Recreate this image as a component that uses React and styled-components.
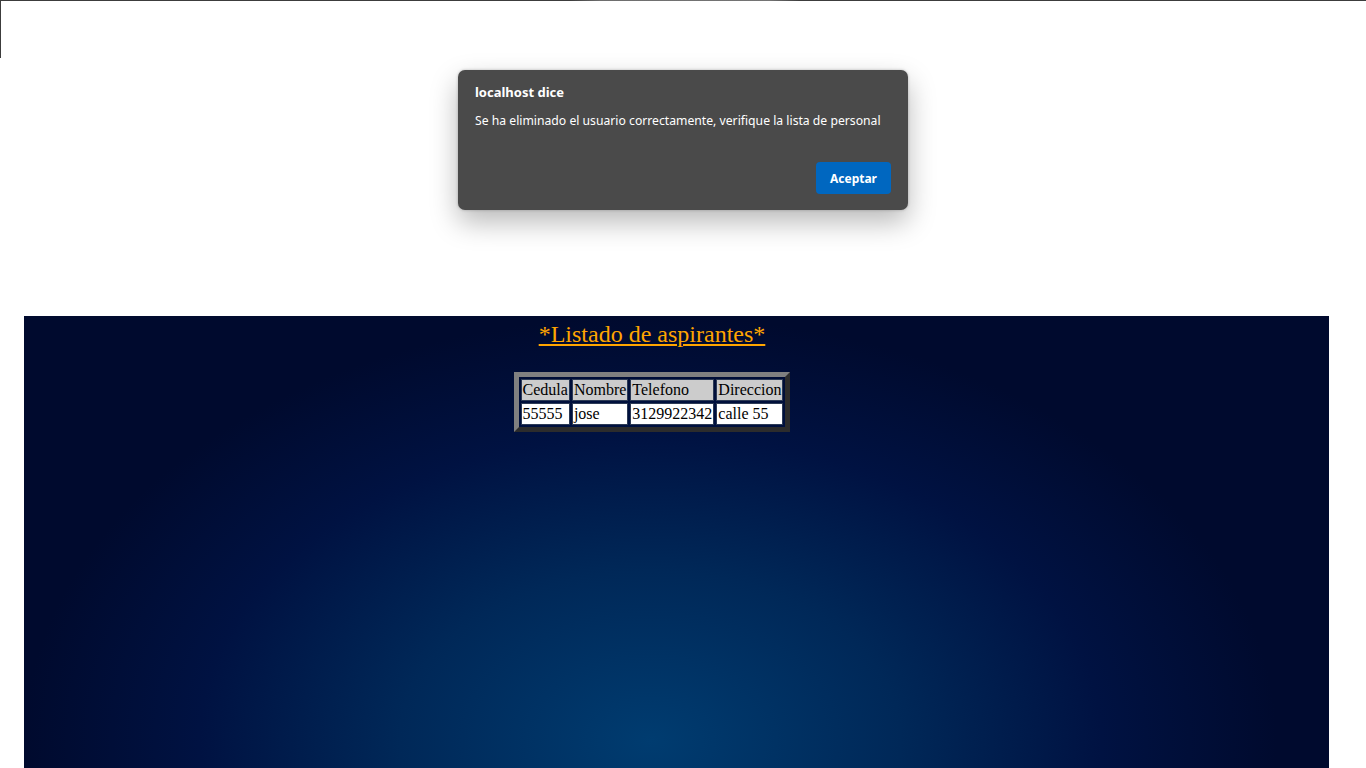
import React from "react";
import styled, { createGlobalStyle } from "styled-components";

const GlobalStyle = createGlobalStyle`
    html, body {
        margin: 0;
        padding: 0;
        background: #ffffff;
        overflow: hidden;
    }
    body {
        font-family: "Liberation Serif", "Times New Roman", serif;
    }
`;

const Page = styled.div`
    position: relative;
    width: 1366px;
    height: 768px;
    padding: 316px 0 0 24px;
    box-sizing: border-box;
    overflow: hidden;
`;

// thin window frame leftovers at the top-left corner
const TopEdge = styled.div`
    position: absolute;
    top: 0;
    left: 0;
    width: 100%;
    height: 1px;
    background: linear-gradient(
        to right,
        #3c3c3c 0,
        #3c3c3c 570px,
        #6e6e6e 600px,
        #747474 770px,
        #3c3c3c 800px,
        #3c3c3c 100%
    );
`;

const LeftEdge = styled.div`
    position: absolute;
    top: 0;
    left: 0;
    width: 1px;
    height: 58px;
    background: #3c3c3c;
`;

const Panel = styled.div`
    width: 1305px;
    height: 850px;
    padding: 5px 49px 0 0;
    box-sizing: border-box;
    background: radial-gradient(
        ellipse closest-side at 48% 50%,
        #003c70 0%,
        #002858 40%,
        #001242 72%,
        #000a2e 100%
    );
    display: flex;
    flex-direction: column;
    align-items: center;
`;

const Title = styled.div`
    font-size: 24px;
    color: #ffa500;
    text-decoration: underline;
    margin-bottom: 24px;
`;

const Table = styled.table`
    border: 5px outset #808080;
    border-spacing: 2px;
    font-size: 16px;
`;

const Cell = styled.td`
    border: 1px solid #2c3a55;
    padding: 1px;
    background: ${(p) => (p.$head ? "#cccccc" : "#ffffff")};
    color: #000000;
    white-space: nowrap;
`;

const Dialog = styled.div`
    position: absolute;
    top: 70px;
    left: 458px;
    width: 450px;
    height: 140px;
    box-sizing: border-box;
    background: #4a4a4a;
    border-radius: 7px;
    box-shadow: 0 12px 28px rgba(0, 0, 0, 0.28), 0 0 3px rgba(0, 0, 0, 0.25);
    padding: 14px 17px 16px 17px;
    display: flex;
    flex-direction: column;
    font-family: "Noto Sans", "Open Sans", sans-serif;
    color: #ffffff;
`;

const DialogTitle = styled.div`
    font-size: 13px;
    font-weight: 700;
    line-height: 16px;
`;

const DialogText = styled.div`
    font-size: 12.2px;
    line-height: 16px;
    margin-top: 13px;
`;

const DialogFooter = styled.div`
    margin-top: auto;
    display: flex;
    justify-content: flex-end;
`;

const Button = styled.button`
    width: 75px;
    height: 32px;
    border: none;
    border-radius: 4px;
    background: #0067c0;
    color: #ffffff;
    font-family: "Noto Sans", "Open Sans", sans-serif;
    font-size: 12px;
    font-weight: 700;
`;

const headers = ["Cedula", "Nombre", "Telefono", "Direccion"];
const rows = [["55555", "jose", "3129922342", "calle 55"]];

export default function App() {
    return (
        <Page>
            <GlobalStyle />
            <TopEdge />
            <LeftEdge />
            <Panel>
                <Title>*Listado de aspirantes*</Title>
                <Table>
                    <tbody>
                        <tr>
                            {headers.map((h) => (
                                <Cell $head key={h}>
                                    {h}
                                </Cell>
                            ))}
                        </tr>
                        {rows.map((r, i) => (
                            <tr key={i}>
                                {r.map((v, j) => (
                                    <Cell key={j}>{v}</Cell>
                                ))}
                            </tr>
                        ))}
                    </tbody>
                </Table>
            </Panel>
            <Dialog>
                <DialogTitle>localhost dice</DialogTitle>
                <DialogText>
                    Se ha eliminado el usuario correctamente, verifique la lista de personal
                </DialogText>
                <DialogFooter>
                    <Button>Aceptar</Button>
                </DialogFooter>
            </Dialog>
        </Page>
    );
}
